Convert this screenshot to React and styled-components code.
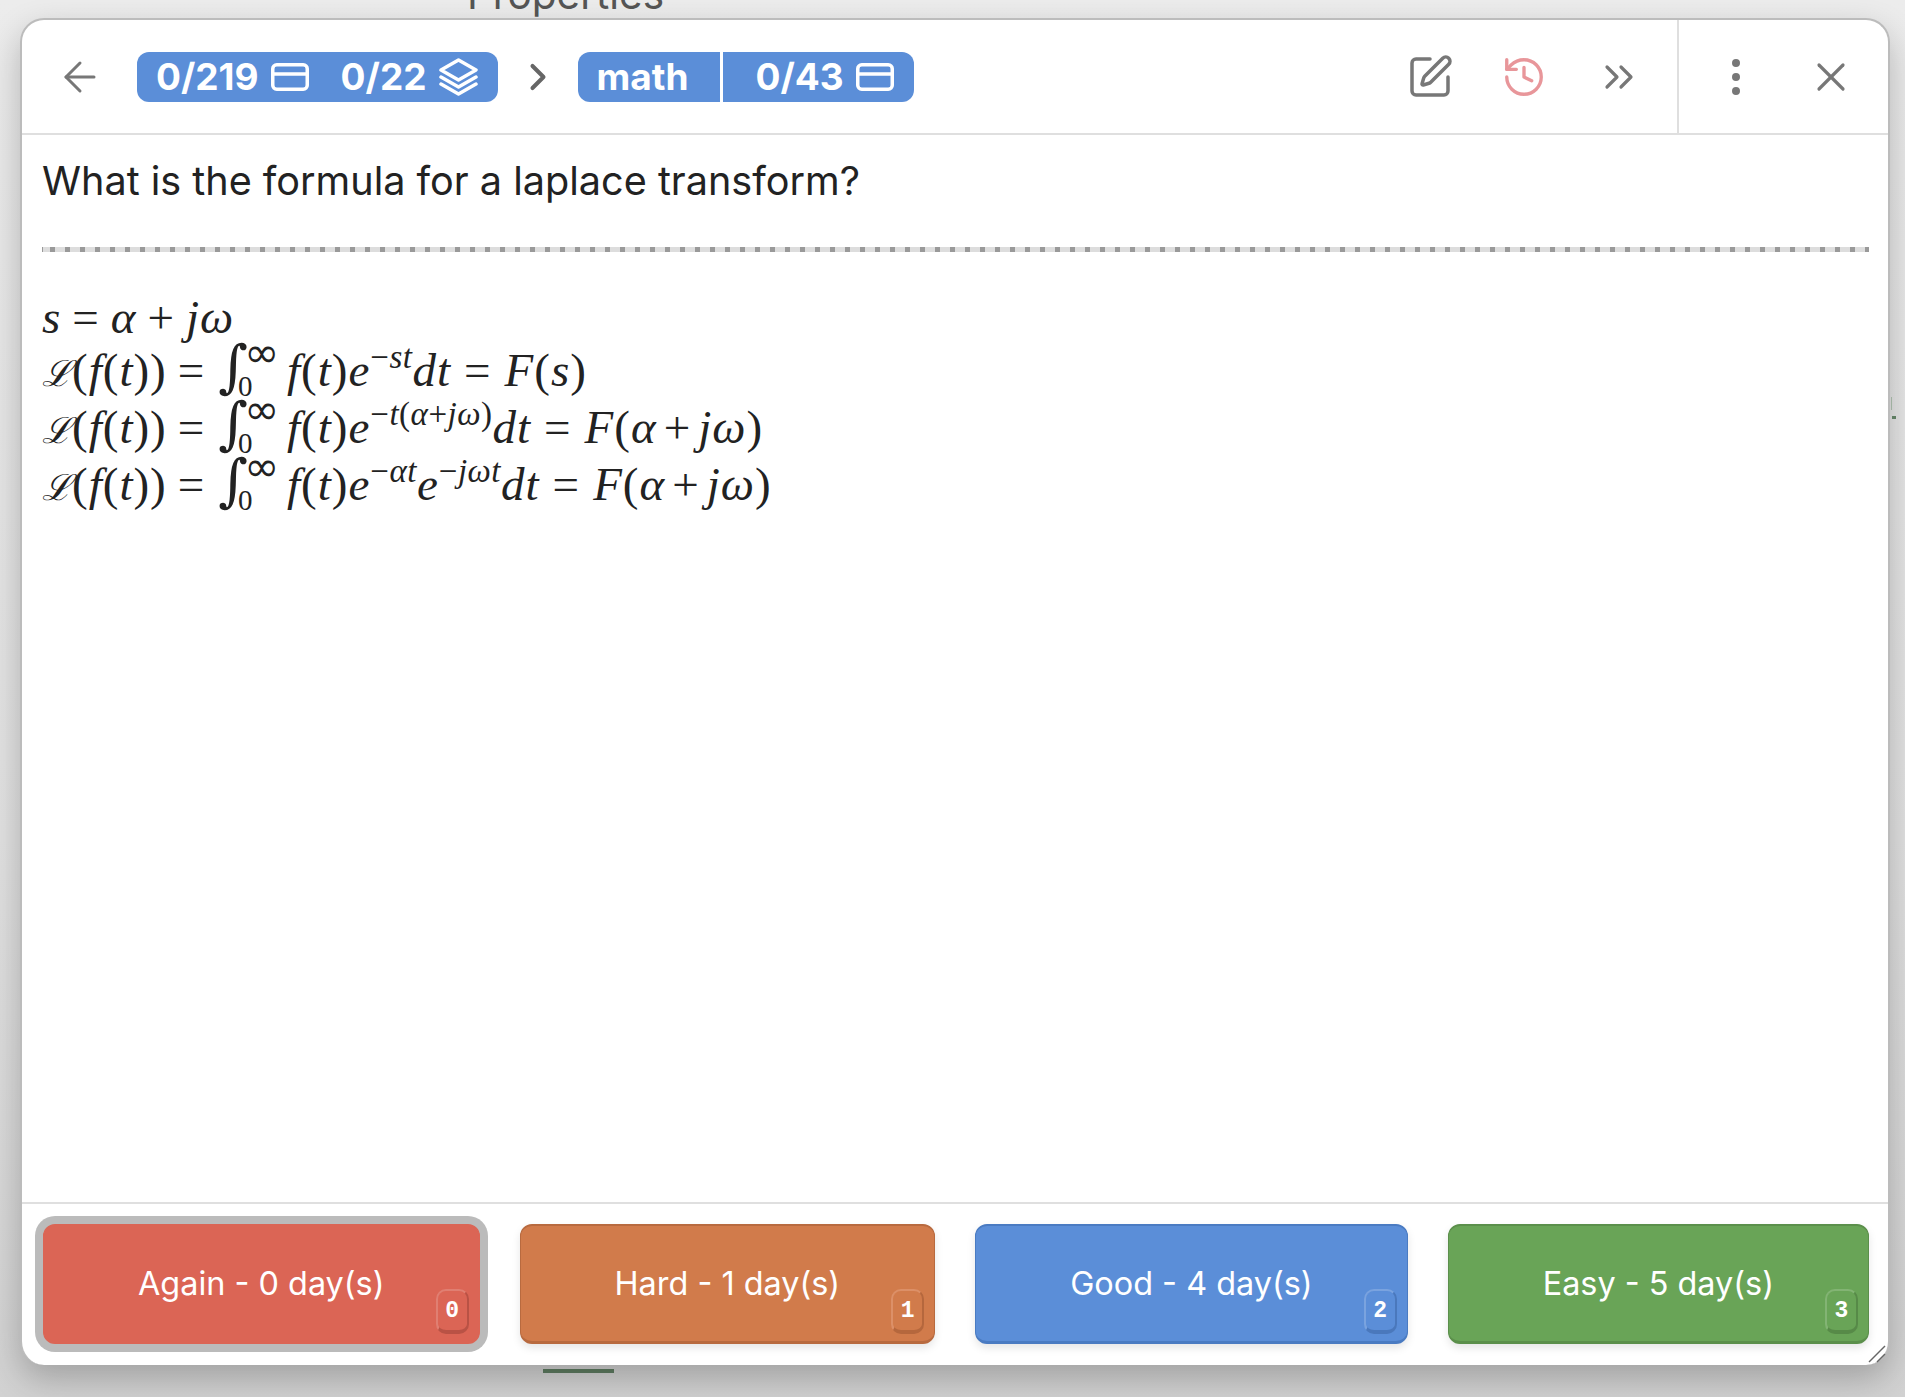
import React from 'react';
import styled, { createGlobalStyle } from 'styled-components';
import { ArrowLeft, ChevronRight, SquarePen, History, ChevronsRight, MoreVertical, X } from 'lucide-react';

const GlobalStyle = createGlobalStyle`
    html, body {
        margin: 0;
        padding: 0;
        background: #e9e9e9;
    }
    * {
        box-sizing: border-box;
    }
`;

const Page = styled.div`
    position: relative;
    width: 1905px;
    height: 1397px;
    overflow: hidden;
    display: flex;
    flex-direction: column;
    font-family: Inter, "Liberation Sans", sans-serif;
    background: linear-gradient(180deg, #ececec 0%, #e2e2e2 60%, #d2d2d2 100%);
`;

const BehindTitle = styled.div`
    height: 18px;
    padding-left: 467px;
    line-height: 0;
    margin-top: -5px;
    margin-bottom: 5px;
    font-size: 40.5px;
    color: #555;
`;

const Modal = styled.div`
    position: relative;
    margin-left: 20px;
    width: 1870px;
    height: 1347px;
    flex: none;
    display: flex;
    flex-direction: column;
    background: #fff;
    border: 2px solid #bcbcbc;
    border-bottom: none;
    border-radius: 24px;
    box-shadow: 0 14px 34px rgba(0, 0, 0, 0.24);
`;

const Header = styled.div`
    height: 115px;
    flex: none;
    display: flex;
    align-items: center;
    padding-left: 34px;
    border-bottom: 2px solid #dfdfdf;
`;

const Crumbs = styled.div`
    display: flex;
    align-items: center;
    margin-left: 33px;
`;

const Badge = styled.div`
    height: 50px;
    display: flex;
    align-items: center;
    padding: 0 20px 0 19px;
    border-radius: 12px;
    background: #5b8ed8;
    color: #fff;
    font-size: 37px;
    font-weight: 700;
    white-space: nowrap;
`;

const Count = styled.span`
    margin-left: ${p => p.$gap || 0}px;
`;

const BadgeIcon = styled.svg`
    margin-left: 12px;
    flex: none;
`;

const BadgeDivider = styled.div`
    width: 3px;
    height: 50px;
    margin: 0 32px;
    background: #fff;
`;

const CrumbArrow = styled.div`
    width: 80px;
    display: flex;
    justify-content: center;
    color: #666;
`;

const Actions = styled.div`
    margin-left: auto;
    height: 100%;
    display: flex;
    align-items: center;
    padding-right: 11px;
`;

const Extra = styled.div`
    height: 100%;
    display: flex;
    align-items: center;
    padding: 0 10px;
    border-left: 2px solid #dfdfdf;
`;

const IconButton = styled.div`
    width: 94.5px;
    display: flex;
    justify-content: center;
    color: ${p => p.$color || '#777'};
`;

const Content = styled.div`
    flex: 1;
    padding: 0 19px 0 20px;
`;

const Question = styled.div`
    margin-top: 18px;
    font-size: 39.6px;
    line-height: 56px;
    color: #222;
`;

const Rule = styled.div`
    height: 5px;
    margin-top: 38px;
    background-color: #ddd;
    background-image: repeating-linear-gradient(90deg, #999 0 5px, transparent 5px 15px);
    background-position: 8px 0;
`;

const MathBlock = styled.div`
    margin-top: 44px;
    font-family: "Liberation Serif", serif;
    font-size: 47px;
    letter-spacing: 1px;
    color: #222;
`;

const MathLine = styled.div`
    height: ${p => p.$h || 57}px;
    line-height: ${p => p.$h || 57}px;
    white-space: nowrap;
    overflow: visible;
`;

const Mi = styled.i`
    font-style: italic;
`;

const Op = styled.span`
    margin: 0 ${p => p.$space || 11}px;
`;

const Script = styled.span`
    font-family: "DejaVu Serif", serif;
    font-style: italic;
    font-size: 36px;
    letter-spacing: 0;
`;

const Integral = styled.span`
    font-family: "DejaVu Serif", serif;
    font-size: 57px;
    letter-spacing: 0;
    margin-left: 2px;
    margin-right: -10px;
`;

const Limits = styled.span`
    display: inline-flex;
    flex-direction: column;
    width: 49px;
    height: 30px;
    vertical-align: 0;
    font-size: 29px;
    line-height: 28px;
    letter-spacing: 0;
`;

const Upper = styled.span`
    height: 0;
    padding-left: 6px;
    transform: translateY(-19px);
    font-family: "DejaVu Sans", sans-serif;
    font-size: 42px;
`;

const Lower = styled.span`
    height: 0;
    transform: translateY(14px);
`;

const Sup = styled.sup`
    font-size: 33px;
    line-height: 0;
    vertical-align: 18px;
    letter-spacing: 0.5px;
`;

const Footer = styled.div`
    flex: none;
    height: 163px;
    display: flex;
    gap: 40px;
    padding: 20px 19px 0 21px;
    border-top: 2px solid #dfdfdf;
`;

const colors = {
    again: { bg: '#db6555', dark: '#db6555', lite: '#e07f72', key: '#b95245' },
    hard: { bg: '#d17b4b', dark: '#b86a3f', lite: '#dc9068', key: '#b5673d' },
    good: { bg: '#5b8ed8', dark: '#4a7bc2', lite: '#7aa3df', key: '#4a78bc' },
    easy: { bg: '#69a457', dark: '#5b8f4b', lite: '#83b474', key: '#578a48' },
};

const GradeButton = styled.div`
    position: relative;
    flex: 1 1 auto;
    height: 120px;
    display: flex;
    align-items: center;
    justify-content: center;
    border-radius: 12px;
    background: ${p => colors[p.$kind].bg};
    border: 1px solid ${p => colors[p.$kind].dark};
    border-top-width: 2px;
    border-bottom-width: 3px;
    color: #fff;
    font-size: 32.4px;
    white-space: nowrap;
    box-shadow: ${p => p.$focused ? '0 0 0 8px #bbb' : '0 4px 8px rgba(0, 0, 0, 0.1)'};
`;

const KeyCap = styled.span`
    position: absolute;
    right: 10px;
    bottom: 7px;
    width: 33px;
    height: 45px;
    display: flex;
    align-items: center;
    justify-content: center;
    border-radius: 10px;
    border: 2px solid ${p => colors[p.$kind].lite};
    border-bottom: 4px solid ${p => colors[p.$kind].key};
    border-right-color: ${p => colors[p.$kind].key};
    font-family: "Liberation Mono", monospace;
    font-size: 23px;
    font-weight: 700;
`;

const ResizeHandle = styled.svg`
    position: absolute;
    right: 1px;
    bottom: 1px;
`;

const TaskbarMark = styled.div`
    width: 71px;
    height: 4px;
    margin: 4px 0 0 543px;
    background: #5f7d62;
`;

const SideTick = styled.div`
    position: absolute;
    left: 1891px;
    top: 397px;
    width: 1px;
    height: 13px;
    background: #9fb0a0;
`;

const SideMark = styled.div`
    position: absolute;
    left: 1892px;
    top: 416px;
    width: 4px;
    height: 3px;
    background: #5f7d62;
`;

const CardIcon = () => (
    <BadgeIcon width="38" height="28" viewBox="0 0 38 28" fill="none" stroke="#fff" strokeWidth="3.5">
        <rect x="1.75" y="1.75" width="34.5" height="24.5" rx="4" />
        <line x1="1.75" y1="11" x2="36.25" y2="11" />
    </BadgeIcon>
);

const StackIcon = () => (
    <BadgeIcon width="39" height="38" viewBox="0 0 39 38" fill="none" stroke="#fff" strokeWidth="3.5" strokeLinejoin="round" strokeLinecap="round">
        <path d="M19.5 2 L37 12 L19.5 22 L2 12 Z" />
        <path d="M2 19 L19.5 29 L37 19" />
        <path d="M2 26 L19.5 36 L37 26" />
    </BadgeIcon>
);

const LaplaceHead = () => (
    <>
        <Script>ℒ</Script>(<Mi>f</Mi>(<Mi>t</Mi>))<Op>=</Op><Integral>∫</Integral>
        <Limits><Upper>∞</Upper><Lower>0</Lower></Limits>
        <Mi>f</Mi>(<Mi>t</Mi>)<Mi>e</Mi>
    </>
);

const GRADES = [
    { kind: 'again', label: 'Again - 0 day(s)', key: '0', focused: true },
    { kind: 'hard', label: 'Hard - 1 day(s)', key: '1' },
    { kind: 'good', label: 'Good - 4 day(s)', key: '2' },
    { kind: 'easy', label: 'Easy - 5 day(s)', key: '3' },
];

const App = () => (
    <Page>
        <GlobalStyle />
        <BehindTitle>Properties</BehindTitle>
        <Modal>
            <Header>
                <ArrowLeft size={48} strokeWidth={1.5} color="#777" />
                <Crumbs>
                    <Badge>
                        <Count>0/219</Count>
                        <CardIcon />
                        <Count $gap={32}>0/22</Count>
                        <StackIcon />
                    </Badge>
                    <CrumbArrow><ChevronRight size={44} strokeWidth={2.2} /></CrumbArrow>
                    <Badge>
                        <Count>math</Count>
                        <BadgeDivider />
                        <Count>0/43</Count>
                        <CardIcon />
                    </Badge>
                </Crumbs>
                <Actions>
                    <IconButton><SquarePen size={48} strokeWidth={1.75} /></IconButton>
                    <IconButton $color="#e8969a"><History size={46} strokeWidth={1.75} /></IconButton>
                    <IconButton><ChevronsRight size={48} strokeWidth={1.6} /></IconButton>
                </Actions>
                <Extra>
                    <IconButton><MoreVertical size={48} strokeWidth={2} /></IconButton>
                    <IconButton><X size={48} strokeWidth={1.6} /></IconButton>
                </Extra>
            </Header>
            <Content>
                <Question>What is the formula for a laplace transform?</Question>
                <Rule />
                <MathBlock>
                    <MathLine $h={42}><Mi>s</Mi><Op>=</Op><Mi>α</Mi><Op>+</Op><Mi>jω</Mi></MathLine>
                    <MathLine>
                        <LaplaceHead /><Sup>−<Mi>st</Mi></Sup><Mi>dt</Mi><Op $space={13}>=</Op><Mi>F</Mi>(<Mi>s</Mi>)
                    </MathLine>
                    <MathLine>
                        <LaplaceHead /><Sup>−<Mi>t</Mi>(<Mi>α</Mi>+<Mi>jω</Mi>)</Sup><Mi>dt</Mi><Op $space={13}>=</Op><Mi>F</Mi>(<Mi>α</Mi><Op $space={7}>+</Op><Mi>jω</Mi>)
                    </MathLine>
                    <MathLine>
                        <LaplaceHead /><Sup>−<Mi>αt</Mi></Sup><Mi>e</Mi><Sup>−<Mi>jωt</Mi></Sup><Mi>dt</Mi><Op $space={13}>=</Op><Mi>F</Mi>(<Mi>α</Mi><Op $space={7}>+</Op><Mi>jω</Mi>)
                    </MathLine>
                </MathBlock>
            </Content>
            <Footer>
                {GRADES.map(g => (
                    <GradeButton key={g.kind} $kind={g.kind} $focused={g.focused}>
                        {g.label}
                        <KeyCap $kind={g.kind}>{g.key}</KeyCap>
                    </GradeButton>
                ))}
            </Footer>
            <ResizeHandle width="20" height="20" viewBox="0 0 20 20" stroke="#666" strokeWidth="1.5" fill="none">
                <line x1="2" y1="18" x2="18" y2="2" />
                <line x1="10" y1="18" x2="18" y2="10" />
            </ResizeHandle>
        </Modal>
        <TaskbarMark />
        <SideTick />
        <SideMark />
    </Page>
);

export default App;
